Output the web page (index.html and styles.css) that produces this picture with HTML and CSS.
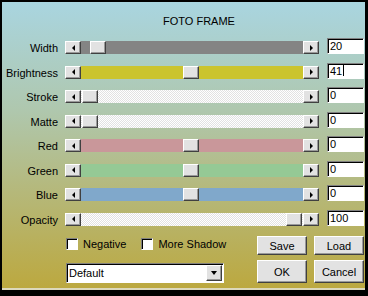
FILE: index.html
```html
<!DOCTYPE html>
<html lang="en">

<head>
  <meta charset="utf-8">
  <title>Foto Frame</title>
  <link rel="stylesheet" href="styles.css">
</head>

<body>
  <!-- 整个对话框 -->
  <div class="window">
    <div class="title">FOTO FRAME</div>

    <!-- 滑块区域 -->
    <div class="sliders">
      <div class="name">Width</div>
      <div class="bar"><span class="arrow left"></span><div class="track gray"><span class="thumb" style="left:9px"></span></div><span class="arrow right"></span></div>
      <div class="field">20</div>

      <div class="name">Brightness</div>
      <div class="bar"><span class="arrow left"></span><div class="track yellow"><span class="thumb" style="left:102px"></span></div><span class="arrow right"></span></div>
      <div class="field">41<span class="caret"></span></div>

      <div class="name">Stroke</div>
      <div class="bar"><span class="arrow left"></span><div class="track dots"><span class="thumb" style="left:1px"></span></div><span class="arrow right"></span></div>
      <div class="field">0</div>

      <div class="name">Matte</div>
      <div class="bar"><span class="arrow left"></span><div class="track dots"><span class="thumb" style="left:1px"></span></div><span class="arrow right"></span></div>
      <div class="field">0</div>

      <div class="name">Red</div>
      <div class="bar"><span class="arrow left"></span><div class="track red"><span class="thumb" style="left:102px"></span></div><span class="arrow right"></span></div>
      <div class="field">0</div>

      <div class="name">Green</div>
      <div class="bar"><span class="arrow left"></span><div class="track green"><span class="thumb" style="left:102px"></span></div><span class="arrow right"></span></div>
      <div class="field">0</div>

      <div class="name">Blue</div>
      <div class="bar"><span class="arrow left"></span><div class="track blue"><span class="thumb" style="left:102px"></span></div><span class="arrow right"></span></div>
      <div class="field">0</div>

      <div class="name">Opacity</div>
      <div class="bar"><span class="arrow left"></span><div class="track dots"><span class="thumb" style="left:205px"></span></div><span class="arrow right"></span></div>
      <div class="field">100</div>
    </div>

    <!-- 下面的选项和按钮 -->
    <div class="bottom">
      <div class="checks">
        <span class="check"><span class="box"></span>Negative</span>
        <span class="check more"><span class="box"></span>More Shadow</span>
      </div>
      <button class="btn">Save</button>
      <button class="btn">Load</button>

      <div class="select">
        <span>Default</span>
        <span class="drop"></span>
      </div>
      <button class="btn">OK</button>
      <button class="btn">Cancel</button>
    </div>
  </div>
</body>

</html>
```

FILE: styles.css
```css
* {
  margin: 0;
  padding: 0;
  box-sizing: border-box;
}

body {
  font: 11px "Liberation Sans", Arial, sans-serif;
  color: #000;
}

/* 外框，上面浅蓝下面土黄的渐变 */
.window {
  width: 368px;
  height: 296px;
  border-style: solid;
  border-color: #000;
  border-width: 2px 3px 6px 2px;
  background: linear-gradient(#a9d5e0, #afc7ad 38%, #b5b87a 66%, #bca83e);
  box-shadow: inset 0 -2px #dcd8bc;
}

.title {
  height: 27.5px;
  padding: 13px 0 0 161px;
  line-height: 13px;
}

.sliders {
  display: grid;
  grid-template-columns: 56px 254px 39px;
  grid-auto-rows: 24.5px;
  column-gap: 7px;
  align-items: end;
}

.name {
  text-align: right;
  line-height: 11px;
}

.bar {
  display: flex;
  height: 13px;
}

/* 凸起的小按钮 */
.arrow,
.thumb,
.btn,
.drop {
  background: #e2e2e2;
  border: 1px solid;
  border-color: #fff #404040 #404040 #fff;
  box-shadow: inset -1px -1px #9a9a9a;
}

.arrow {
  flex: none;
  width: 16px;
  display: flex;
  align-items: center;
  justify-content: center;
}

.arrow::after {
  content: "";
  border-top: 3px solid transparent;
  border-bottom: 3px solid transparent;
}

.left::after {
  border-right: 3px solid #000;
}

.right::after {
  border-left: 3px solid #000;
}

.track {
  flex: 1;
  position: relative;
}

.thumb {
  position: absolute;
  top: 0;
  width: 16px;
  height: 13px;
}

.gray {
  background: #848484;
}

.yellow {
  background: #cbc42e;
}

.red {
  background: #c9979a;
}

.green {
  background: #95c995;
}

.blue {
  background: #80a8cb;
}

/* 白色细格子的底 */
.dots {
  background: conic-gradient(#e2e2e2 25%, #fff 0 50%, #e2e2e2 0 75%, #fff 0);
  background-size: 2px 2px;
}

/* 凹下去的输入框 */
.field,
.box,
.select {
  background: #fff;
  border: 1px solid;
  border-color: #808080 #fff #fff #808080;
  box-shadow: inset 1px 1px #000;
}

.field {
  width: 37px;
  height: 16px;
  margin-left: 1px;
  padding-left: 2px;
  line-height: 14px;
}

.caret {
  display: inline-block;
  width: 1px;
  height: 11px;
  background: #000;
  vertical-align: -1px;
  margin-left: 1px;
}

/* 左边 66px 起，按钮从 257px 起 */
.bottom {
  display: grid;
  grid-template-columns: 184px 50px 50px;
  grid-template-rows: 19px 23px;
  column-gap: 7px;
  row-gap: 5px;
  padding: 10.5px 0 0 64px;
}

.checks {
  display: flex;
  align-items: center;
  align-self: start;
  height: 13px;
  margin-top: 1px;
}

.check {
  display: flex;
  align-items: center;
  gap: 5px;
}

.more {
  margin-left: 15px;
}

.box {
  width: 12px;
  height: 12px;
}

.select {
  width: 158px;
  height: 20px;
  align-self: end;
  display: flex;
  align-items: center;
  justify-content: space-between;
  padding-left: 2px;
}

.drop {
  width: 16px;
  height: 16px;
  margin-right: 1px;
  display: flex;
  align-items: center;
  justify-content: center;
}

.drop::after {
  content: "";
  border-left: 3px solid transparent;
  border-right: 3px solid transparent;
  border-top: 4px solid #000;
}

.btn {
  font: inherit;
  color: #000;
  display: flex;
  align-items: center;
  justify-content: center;
}
```
